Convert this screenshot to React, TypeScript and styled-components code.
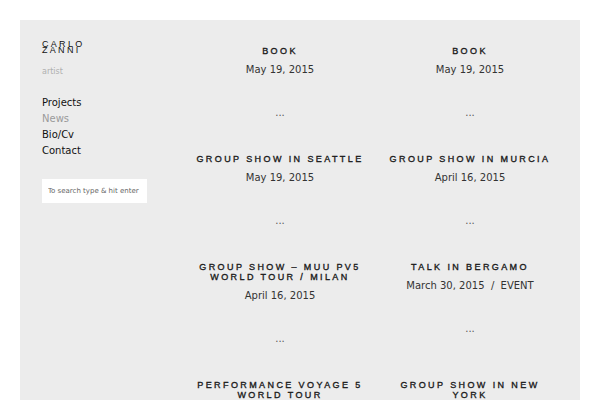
import React from "react";
import styled, { createGlobalStyle } from "styled-components";

const Global = createGlobalStyle`
  html, body { margin: 0; padding: 0; background: #ffffff; }
  body { font-family: "DejaVu Sans", sans-serif; }
  * { box-sizing: border-box; }
`;

const Page = styled.div`
  padding: 20px 20px 0 20px;
  height: 400px;
  overflow: hidden;
`;

const Panel = styled.div`
  background: #ececec;
  height: 100%;
  display: flex;
  padding: 0 20px 0 22px;
`;

const Sidebar = styled.aside`
  width: 105px;
  flex: none;
  margin-right: 43px;
  padding-top: 22px;
`;

const SiteName = styled.h1`
  margin: 0;
  font-family: "Liberation Sans", Arial, sans-serif;
  font-weight: 400;
  font-size: 9px;
  line-height: 5.5px;
  letter-spacing: 2.3px;
  color: #111;
  text-transform: uppercase;
`;

const Tagline = styled.div`
  margin-top: 13px;
  font-size: 8px;
  line-height: 12px;
  color: #b0b0b0;
`;

const Nav = styled.nav`
  margin-top: 17px;
  display: flex;
  flex-direction: column;
`;

const NavLink = styled.a<{ $active?: boolean }>`
  font-size: 10px;
  line-height: 16px;
  color: ${(p) => (p.$active ? "#9a9a9a" : "#111")};
  text-decoration: none;
`;

const Search = styled.input`
  margin-top: 20px;
  width: 105px;
  height: 24px;
  border: none;
  outline: none;
  background: #fff;
  padding: 0 6px;
  font-family: "DejaVu Sans", sans-serif;
  font-size: 7px;
  color: #555;
  &::placeholder { color: #666; }
`;

const Grid = styled.main`
  display: grid;
  grid-template-columns: 180px 180px;
  column-gap: 10px;
  align-content: start;
  padding-top: 26px;
`;

const Item = styled.article`
  display: flex;
  flex-direction: column;
  align-items: center;
  text-align: center;
  padding: 0 0 33px;
`;

const Title = styled.h2`
  margin: 0;
  max-width: 172px;
  font-family: "Liberation Sans", Arial, sans-serif;
  font-weight: 400;
  font-size: 9px;
  line-height: 10px;
  letter-spacing: 2.4px;
  text-transform: uppercase;
  color: #1a1a1a;
  -webkit-text-stroke: 0.35px #1a1a1a;
`;

const Meta = styled.div`
  margin-top: 6px;
  font-size: 10px;
  line-height: 16px;
  color: #333;
  white-space: pre;
`;

const Dots = styled.div`
  margin-top: 27px;
  font-size: 10px;
  line-height: 16px;
  color: #555;
`;

const posts = [
  { title: "Book", date: "May 19, 2015" },
  { title: "Book", date: "May 19, 2015" },
  { title: "Group show in Seattle", date: "May 19, 2015" },
  { title: "Group show in Murcia", date: "April 16, 2015" },
  { title: "Group show – MUU PV5 World Tour / Milan", date: "April 16, 2015" },
  { title: "Talk in Bergamo", date: "March 30, 2015  /  EVENT" },
  { title: "Performance Voyage 5 World Tour", date: "March 30, 2015" },
  { title: "Group show in New York", date: "March 30, 2015" },
];

export default function App() {
  return (
    <>
      <Global />
      <Page>
        <Panel>
          <Sidebar>
            <SiteName>
              Carlo
              <br />
              Zanni
            </SiteName>
            <Tagline>artist</Tagline>
            <Nav>
              <NavLink href="#">Projects</NavLink>
              <NavLink href="#" $active>
                News
              </NavLink>
              <NavLink href="#">Bio/Cv</NavLink>
              <NavLink href="#">Contact</NavLink>
            </Nav>
            <Search placeholder="To search type & hit enter" />
          </Sidebar>
          <Grid>
            {posts.map((p, i) => (
              <Item key={i}>
                <Title>{p.title}</Title>
                <Meta>{p.date}</Meta>
                <Dots>...</Dots>
              </Item>
            ))}
          </Grid>
        </Panel>
      </Page>
    </>
  );
}
